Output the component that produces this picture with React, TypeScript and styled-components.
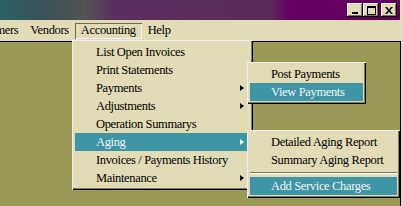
import React from 'react';
import styled, { createGlobalStyle } from 'styled-components';

const Global = createGlobalStyle`
  html, body {
    margin: 0;
    padding: 0;
    overflow: hidden;
    background: #9b9957;
  }
`;

const Window = styled.div`
  position: relative;
  width: 403px;
  height: 206px;
  overflow: hidden;
  display: flex;
  flex-direction: column;
  background: #e2dcb6;
  font-family: "Liberation Serif", "Times New Roman", serif;
  font-size: 12.5px;
  letter-spacing: -0.35px;
  color: #000;
`;

const TitleBar = styled.div`
  height: 20px;
  margin-right: 3px;
  padding-right: 3px;
  display: flex;
  align-items: center;
  justify-content: flex-end;
  background: linear-gradient(
    to right,
    #2b6264 0px,
    #3b5259 45px,
    #545454 85px,
    #5a2e5e 115px,
    #5c2a5a 270px,
    #660060 290px,
    #660060 100%
  );
`;

const CaptionButton = styled.div<{ $gap?: boolean }>`
  width: 16px;
  height: 14px;
  box-sizing: border-box;
  margin-left: ${p => (p.$gap ? '2px' : '0')};
  background: #e2dcb6;
  box-shadow: inset -1px -1px 0 #000, inset 1px 1px 0 #fff, inset -2px -2px 0 #7c7a50;
  display: flex;
  align-items: center;
  justify-content: center;
`;

const MenuBar = styled.div`
  height: 21px;
  display: flex;
  align-items: center;
`;

const MenuItem = styled.div<{ $open?: boolean; $shift?: number }>`
  height: 16px;
  padding: 0 6px;
  margin-left: ${p => (p.$shift ? `${p.$shift}px` : '0')};
  display: flex;
  align-items: center;
  white-space: nowrap;
  box-sizing: border-box;
  box-shadow: ${p => (p.$open ? 'inset 1px 1px 0 #6e6c50, inset -1px -1px 0 #f4f2ff' : 'none')};
`;

const Client = styled.div`
  flex: 1;
  margin-right: 2px;
  background: #9b9957;
  border-top: 1px solid #000;
  border-right: 1px solid #000;
`;

const Menu = styled.div<{ $x: number; $y: number; $w: number }>`
  position: absolute;
  left: ${p => p.$x}px;
  top: ${p => p.$y}px;
  width: ${p => p.$w}px;
  box-sizing: border-box;
  padding: 3px;
  background: #e2dcb6;
  box-shadow: inset 1px 1px 0 #eeeefa, inset -1px -1px 0 #000, inset -2px -2px 0 #7c7a50;
`;

const Row = styled.div<{ $active?: boolean }>`
  height: 18px;
  display: flex;
  align-items: center;
  padding: 0 6px 0 21px;
  white-space: nowrap;
  background: ${p => (p.$active ? '#3d95a6' : 'transparent')};
  color: ${p => (p.$active ? '#f4f4f4' : '#000')};
`;

const Arrow = styled.span<{ $active?: boolean }>`
  margin-left: auto;
  width: 0;
  height: 0;
  border-top: 3.5px solid transparent;
  border-bottom: 3.5px solid transparent;
  border-left: 4px solid ${p => (p.$active ? '#f4f4f4' : '#000')};
`;

const Separator = styled.div`
  height: 8px;
  display: flex;
  align-items: center;
  &::after {
    content: '';
    flex: 1;
    height: 1px;
    background: #7c7a50;
    border-bottom: 1px solid #fff;
  }
`;

const MinIcon = () => (
  <svg width="8" height="8" viewBox="0 0 8 8">
    <rect x="1" y="6" width="6" height="2" fill="#000" />
  </svg>
);

const MaxIcon = () => (
  <svg width="9" height="9" viewBox="0 0 9 9">
    <rect x="0.5" y="0.5" width="8" height="8" fill="none" stroke="#000" />
    <rect x="0" y="0" width="9" height="2" fill="#000" />
  </svg>
);

const CloseIcon = () => (
  <svg width="8" height="7" viewBox="0 0 8 7">
    <path d="M0 0h2l2 2.5L6 0h2L5 3.5 8 7H6L4 4.5 2 7H0l3-3.5z" fill="#000" />
  </svg>
);

type Item = { label: string; sub?: boolean; active?: boolean; sep?: boolean };

const accounting: Item[] = [
  { label: 'List Open Invoices' },
  { label: 'Print Statements' },
  { label: 'Payments', sub: true },
  { label: 'Adjustments', sub: true },
  { label: 'Operation Summarys' },
  { label: 'Aging', sub: true, active: true },
  { label: 'Invoices / Payments History' },
  { label: 'Maintenance', sub: true },
];

const payments: Item[] = [
  { label: 'Post Payments' },
  { label: 'View Payments', active: true },
];

const aging: Item[] = [
  { label: 'Detailed Aging Report' },
  { label: 'Summary Aging Report' },
  { label: '', sep: true },
  { label: 'Add Service Charges', active: true },
];

const renderItems = (items: Item[]) =>
  items.map((it, i) =>
    it.sep ? (
      <Separator key={i} />
    ) : (
      <Row key={i} $active={it.active}>
        {it.label}
        {it.sub && <Arrow $active={it.active} />}
      </Row>
    )
  );

const App = () => {
  return (
    <>
      <Global />
      <Window>
        <TitleBar>
          <CaptionButton><MinIcon /></CaptionButton>
          <CaptionButton><MaxIcon /></CaptionButton>
          <CaptionButton $gap><CloseIcon /></CaptionButton>
        </TitleBar>
        <MenuBar>
          <MenuItem $shift={-38}>Customers</MenuItem>
          <MenuItem>Vendors</MenuItem>
          <MenuItem $open>Accounting</MenuItem>
          <MenuItem>Help</MenuItem>
        </MenuBar>
        <Client />
        <Menu $x={72} $y={40} $w={181}>{renderItems(accounting)}</Menu>
        <Menu $x={247} $y={62} $w={119}>{renderItems(payments)}</Menu>
        <Menu $x={247} $y={130} $w={153}>{renderItems(aging)}</Menu>
      </Window>
    </>
  );
};

export default App;
